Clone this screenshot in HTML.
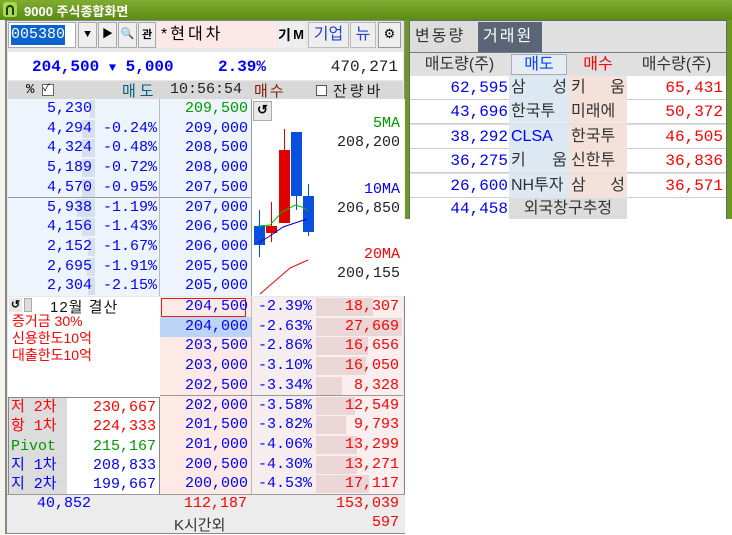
<!DOCTYPE html><html><head><meta charset="utf-8"><style>
*{margin:0;padding:0;box-sizing:border-box}
body{width:732px;height:534px;position:relative;overflow:hidden;background:#fff;font-family:"Liberation Mono","Noto Sans CJK KR",monospace;font-size:15px}
.a{position:absolute}
.r{text-align:right}
.c{text-align:center}
.k{font-family:"Liberation Sans","Noto Sans CJK KR",sans-serif}
.b{color:#0000ff}.rd{color:#ff0000}.g{color:#009900}
</style></head><body>
<div class="a" style="left:0;top:0;width:732px;height:20px;background:linear-gradient(#80ac30,#5c8c14)"></div>
<div class="a" style="left:3px;top:2px;width:14px;height:15px;background:#a8d850;border-radius:3px"></div>
<div class="a" style="left:6px;top:5px;width:8px;height:10px;border:2px solid #1a3a00;border-bottom:none;border-radius:4px 4px 0 0"></div>
<div class="a k" style="left:24px;top:1px;font-size:13px;font-weight:bold;color:#fff">9000 주식종합화면</div>
<div class="a" style="left:0;top:20px;width:6px;height:514px;background:#f4f4ec;border-right:1px solid #888"></div>
<div class="a" style="left:405px;top:20px;width:4px;height:200px;background:#6a9a20"></div>
<div class="a" style="left:727px;top:20px;width:5px;height:200px;background:#6a9a20"></div>
<!-- left panel -->
<div class="a" style="left:6px;top:20px;width:399px;height:514px;background:#e8e8e8;border:1px solid #888"></div>
<!-- row1 -->
<div class="a" style="left:8px;top:22px;width:68px;height:26px;background:#fff;border:1px solid #aaa"></div>
<div class="a" style="left:11px;top:25px;width:54px;height:20px;background:#0a64d0;color:#fff;font-size:15px;line-height:20px" >005380</div>
<div class="a c" style="left:78px;top:22px;width:19px;height:26px;background:#eee;border:1px solid #aaa;font-size:11px;line-height:24px">▼</div>
<div class="a c" style="left:98px;top:22px;width:19px;height:26px;background:#eee;border:1px solid #aaa;font-size:11px;line-height:24px">▶</div>
<div class="a c" style="left:118px;top:22px;width:19px;height:26px;background:#eee;border:1px solid #aaa;font-size:11px;line-height:24px">🔍</div>
<div class="a c k" style="left:138px;top:22px;width:18px;height:26px;background:#eee;border:1px solid #aaa;font-size:11px;line-height:24px;font-weight:bold">관</div>
<div class="a k" style="left:157px;top:22px;width:120px;height:26px;background:#fde8e8;font-size:16px;line-height:26px;padding-left:4px;letter-spacing:3px">*현대차</div>
<div class="a c k" style="left:278px;top:22px;width:13px;height:26px;background:#eee;font-size:14px;line-height:26px;font-weight:bold">기</div>
<div class="a c k" style="left:292px;top:22px;width:13px;height:26px;background:#eee;font-size:13px;line-height:26px;font-weight:bold">M</div>
<div class="a c k" style="left:308px;top:22px;width:41px;height:26px;background:#eee;border:1px solid #bbb;font-size:16px;line-height:24px;color:#2244cc">기업</div>
<div class="a c k" style="left:350px;top:22px;width:26px;height:26px;background:#eee;border:1px solid #bbb;font-size:16px;line-height:24px;color:#2244cc">뉴</div>
<div class="a c" style="left:378px;top:22px;width:23px;height:26px;background:#eee;border:1px solid #999;font-size:13px;line-height:24px">⚙</div>
<!-- row2 -->
<div class="a" style="left:8px;top:52px;width:395px;height:28px;background:#fff"></div>
<div class="a b" style="left:32px;top:58px;font-size:16px;font-weight:bold">204,500 <span style="font-size:12px">▼</span> 5,000</div>
<div class="a b" style="left:218px;top:58px;font-size:16px;font-weight:bold">2.39%</div>
<div class="a r" style="left:300px;top:58px;width:98px;font-size:16px;color:#222">470,271</div>
<!-- row3 -->
<div class="a" style="left:8px;top:81px;width:395px;height:18px;background:#d8d8d8"></div>
<div class="a" style="left:26px;top:82px;font-size:14px">%</div>
<div class="a" style="left:42px;top:84px;width:12px;height:12px;border:1px solid #666;background:#fff;font-size:10px;line-height:10px">✓</div>
<div class="a k" style="left:122px;top:80px;font-size:15px;color:#006080;letter-spacing:4px">매도</div>
<div class="a" style="left:170px;top:81px;font-size:15px;color:#222">10:56:54</div>
<div class="a k" style="left:254px;top:80px;font-size:15px;color:#802000;letter-spacing:2px">매수</div>
<div class="a" style="left:316px;top:85px;width:11px;height:11px;border:1px solid #555;background:#fff"></div>
<div class="a k" style="left:333px;top:80px;font-size:15px;color:#222;letter-spacing:3px">잔량바</div>
<!-- ask area -->
<div class="a" style="left:8px;top:99px;width:243px;height:197px;background:#eef4fb"></div>
<div class="a" style="left:8px;top:197px;width:243px;height:1px;background:#999"></div>
<div class="a" style="left:159px;top:99px;width:1px;height:197px;background:#bbb"></div>
<!-- chart -->
<div class="a" style="left:251px;top:99px;width:154px;height:197px;background:#fff;border-left:1px solid #999"></div>
<div class="a c" style="left:253px;top:101px;width:19px;height:20px;background:#e8e8e8;border:1px solid #aaa;font-size:13px;font-weight:bold;line-height:18px">↺</div>
<div class="a r g" style="left:320px;top:115px;width:80px">5MA</div>
<div class="a r" style="left:320px;top:134px;width:80px;color:#222">208,200</div>
<div class="a r b" style="left:320px;top:181px;width:80px">10MA</div>
<div class="a r" style="left:320px;top:200px;width:80px;color:#222">206,850</div>
<div class="a r rd" style="left:320px;top:246px;width:80px">20MA</div>
<div class="a r" style="left:320px;top:265px;width:80px;color:#222">200,155</div>
<svg class="a" style="left:0;top:0" width="410" height="300">
<g stroke-width="1">
<line x1="259.5" y1="210" x2="259.5" y2="257" stroke="#0050d0"/><rect x="254" y="226" width="11" height="19" fill="#0a50e0"/>
<line x1="271.5" y1="202" x2="271.5" y2="242" stroke="#e00000"/><rect x="266" y="226" width="11" height="7" fill="#e00000"/>
<line x1="284.5" y1="129" x2="284.5" y2="223" stroke="#e00000"/><rect x="279" y="150" width="11" height="73" fill="#e00000"/>
<line x1="296.5" y1="196" x2="296.5" y2="210" stroke="#0050d0"/><rect x="291" y="132" width="11" height="64" fill="#0a50e0"/>
<line x1="308.5" y1="184" x2="308.5" y2="236" stroke="#0050d0"/><rect x="303" y="196" width="11" height="36" fill="#0a50e0"/>
<polyline points="258,226 270,225 282,212 295,205 302,207 308,211" fill="none" stroke="#00bb00"/>
<polyline points="258,243 270,236 283,227 295,223 307,219" fill="none" stroke="#0000cc"/>
<polyline points="260,294 275,281 290,268 308,260" fill="none" stroke="#ee0000"/>
</g></svg>
<!-- bid area -->
<div class="a" style="left:160px;top:297px;width:91px;height:197px;background:#fdeae6"></div>
<div class="a" style="left:251px;top:297px;width:64px;height:197px;background:#f6eeee;border-left:1px solid #bbb"></div>
<div class="a" style="left:315px;top:297px;width:88px;height:197px;background:#faeeee"></div>
<div class="a" style="left:160px;top:395px;width:243px;height:1px;background:#999"></div>
<div class="a" style="left:161px;top:298px;width:85px;height:19px;border:1px solid #e02020"></div>
<div class="a" style="left:160px;top:317px;width:91px;height:20px;background:#bcd4f8"></div>
<!-- info panel -->
<div class="a" style="left:8px;top:297px;width:152px;height:100px;background:#fff"></div>
<div class="a c" style="left:9px;top:298px;width:13px;height:14px;background:#e8e8e8;font-size:11px;font-weight:bold">↺</div>
<div class="a" style="left:24px;top:298px;width:8px;height:14px;background:#ddd;border:1px solid #aaa"></div>
<div class="a k" style="left:50px;top:296px;font-size:15px;color:#111;letter-spacing:1px">12월 결산</div>
<div class="a k rd" style="left:12px;top:313px;font-size:14px;line-height:17px">증거금 30%<br>신용한도10억<br>대출한도10억</div>
<div class="a" style="left:8px;top:397px;width:152px;height:98px;background:#fff;border:1px solid #888"></div>
<div class="a" style="left:9px;top:398px;width:58px;height:96px;background:#dcdcdc"></div>
<div id="dyn"></div>
<!-- footer -->
<div class="a" style="left:7px;top:494px;width:398px;height:39px;background:#ececec;border-top:1px solid #999"></div>
<div class="a r b" style="left:8px;top:495px;width:83px">40,852</div>
<div class="a r rd" style="left:160px;top:495px;width:87px">112,187</div>
<div class="a r rd" style="left:315px;top:495px;width:84px">153,039</div>
<div class="a k" style="left:174px;top:514px;font-size:15px;color:#333">K시간외</div>
<div class="a r rd" style="left:315px;top:514px;width:84px">597</div>
<!-- right panel -->
<div class="a" style="left:409px;top:20px;width:318px;height:200px;background:#e0e0e0;border:1px solid #667"></div>
<div class="a k" style="left:410px;top:21px;width:67px;height:31px;background:#dcdcdc;font-size:16px;line-height:31px;padding-left:5px;color:#333;letter-spacing:2px">변동량</div>
<div class="a k" style="left:478px;top:22px;width:64px;height:30px;background:#5a6676;font-size:16px;line-height:30px;padding-left:5px;color:#fff;letter-spacing:2px">거래원</div>
<div class="a" style="left:410px;top:52px;width:316px;height:1px;background:#778"></div>
<div class="a k c" style="left:410px;top:53px;width:99px;height:23px;font-size:16px;line-height:23px;color:#333">매도량(주)</div>
<div class="a k c" style="left:511px;top:54px;width:56px;height:21px;background:#e6ecf4;border:1px solid #aab;font-size:16px;line-height:19px;color:#0044ff">매도</div>
<div class="a k c" style="left:569px;top:53px;width:58px;height:23px;font-size:16px;line-height:23px;color:#ff0000">매수</div>
<div class="a k c" style="left:627px;top:53px;width:99px;height:23px;font-size:16px;line-height:23px;color:#333">매수량(주)</div>
<div id="brk"></div>
<script>
var asks=[["5,230","","209,500",5],["4,294","-0.24%","209,000",13],["4,324","-0.48%","208,500",13],["5,189","-0.72%","208,000",13],["4,570","-0.95%","207,500",13],["5,938","-1.19%","207,000",18],["4,156","-1.43%","206,500",13],["2,152","-1.67%","206,000",7],["2,695","-1.91%","205,500",8],["2,304","-2.15%","205,000",7]];
var s="";
asks.forEach(function(a,i){var y=99+i*19.7;
s+='<div class="a" style="left:'+(95-a[3])+'px;top:'+(y+1)+'px;width:'+a[3]+'px;height:18px;background:#d5dfee"></div>';
s+='<div class="a r b" style="left:8px;top:'+y+'px;width:84px;line-height:20px">'+a[0]+'</div>';
s+='<div class="a r b" style="left:95px;top:'+y+'px;width:62px;line-height:20px">'+a[1]+'</div>';
s+='<div class="a r '+(i==0?'g':'b')+'" style="left:160px;top:'+y+'px;width:88px;line-height:20px">'+a[2]+'</div>';});
var bids=[["204,500","-2.39%","18,307"],["204,000","-2.63%","27,669"],["203,500","-2.86%","16,656"],["203,000","-3.10%","16,050"],["202,500","-3.34%","8,328"],["202,000","-3.58%","12,549"],["201,500","-3.82%","9,793"],["201,000","-4.06%","13,299"],["200,500","-4.30%","13,271"],["200,000","-4.53%","17,117"]];
bids.forEach(function(a,i){var y=297+i*19.7;var w=Math.round(parseInt(a[2].replace(',',''))*0.0031);
s+='<div class="a" style="left:316px;top:'+(y+1)+'px;width:'+w+'px;height:18px;background:#ead6d6"></div>';
s+='<div class="a r b" style="left:160px;top:'+y+'px;width:88px;line-height:20px">'+a[0]+'</div>';
s+='<div class="a r b" style="left:251px;top:'+y+'px;width:61px;line-height:20px">'+a[1]+'</div>';
s+='<div class="a r rd" style="left:315px;top:'+y+'px;width:84px;line-height:20px">'+a[2]+'</div>';});
var inf=[["저 2차","230,667","rd"],["항 1차","224,333","rd"],["Pivot","215,167","g"],["지 1차","208,833","b"],["지 2차","199,667","b"]];
inf.forEach(function(a,i){var y=398+i*19.3;
s+='<div class="a '+a[2]+'" style="left:11px;top:'+y+'px;line-height:20px">'+a[0]+'</div>';
s+='<div class="a r '+a[2]+'" style="left:67px;top:'+y+'px;width:89px;line-height:20px">'+a[1]+'</div>';});
document.getElementById("dyn").innerHTML=s;
s="";
var br=[["62,595","삼 &nbsp;성","키 &nbsp;움","65,431"],["43,696","한국투","미래에","50,372"],["38,292","CLSA","한국투","46,505"],["36,275","키 &nbsp;움","신한투","36,836"],["26,600","NH투자","삼 &nbsp;성","36,571"]];
br.forEach(function(a,i){var y=76+i*24.4;
s+='<div class="a" style="left:410px;top:'+y+'px;width:316px;height:24px;background:#fff;border-bottom:1px solid #ccc"></div>';
s+='<div class="a" style="left:509px;top:'+y+'px;width:60px;height:24px;background:#dce8f2"></div>';
s+='<div class="a" style="left:569px;top:'+y+'px;width:58px;height:24px;background:#f4e2da"></div>';
s+='<div class="a r b" style="left:410px;top:'+y+'px;width:98px;line-height:24px;font-size:16px">'+a[0]+'</div>';
s+='<div class="a k" style="left:511px;top:'+y+'px;width:56px;line-height:24px;font-size:16px;text-align-last:justify;color:'+(i==2?'#0000ff':'#333')+'">'+a[1]+'</div>';
s+='<div class="a k" style="left:571px;top:'+y+'px;width:54px;line-height:24px;font-size:16px;text-align-last:justify;color:#333">'+a[2]+'</div>';
s+='<div class="a r rd" style="left:627px;top:'+y+'px;width:96px;line-height:24px;font-size:16px">'+a[3]+'</div>';});
s+='<div class="a" style="left:410px;top:198px;width:316px;height:21px;background:#fff"></div>';
s+='<div class="a" style="left:509px;top:198px;width:118px;height:21px;background:#dcdcdc"></div>';
s+='<div class="a r b" style="left:410px;top:197px;width:98px;line-height:24px;font-size:16px">44,458</div>';
s+='<div class="a k c" style="left:509px;top:197px;width:118px;line-height:24px;font-size:16px;color:#333">외국창구추정</div>';
s+='<div class="a" style="left:405px;top:219px;width:327px;height:315px;background:#fff"></div>';
document.getElementById("brk").innerHTML=s;
</script>
</body></html>
